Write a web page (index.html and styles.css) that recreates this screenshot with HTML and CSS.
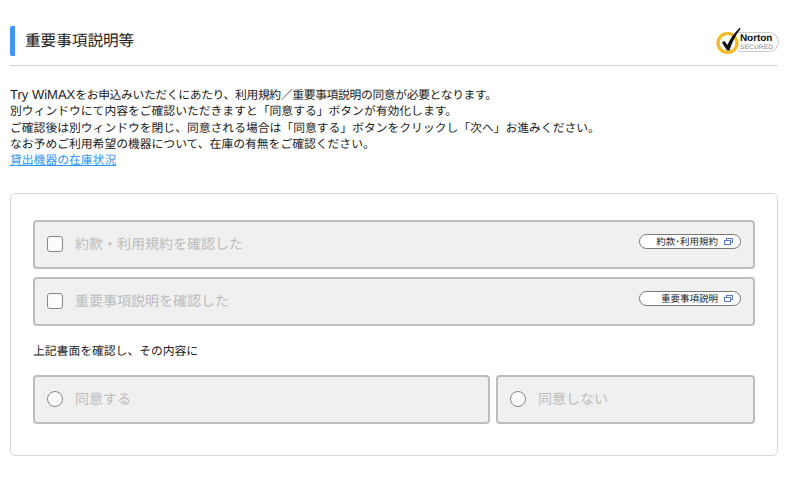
FILE: index.html
```html
<!DOCTYPE html>
<html lang="ja">
<head>
<meta charset="utf-8">
<title>重要事項説明等</title>
<link rel="stylesheet" href="styles.css">
</head>
<body>
<main class="page">
  <header class="head">
    <h1 class="title">重要事項説明等</h1>
    <div class="norton">
      <svg class="norton-mark" viewBox="0 0 30 30" width="30" height="30" aria-hidden="true">
        <circle cx="12.5" cy="16" r="9.5" fill="none" stroke="#f5b921" stroke-width="3.2"/>
        <path d="M7 15.5 L9.5 14 L12.5 18 C15 12 19 6 24 1.5 L25 0.5 L25.5 2 C21 7.5 17 15 14.5 23.5 L12 23.5 Z" fill="#111"/>
      </svg>
      <div class="norton-pill">
        <span class="norton-name">Norton</span>
        <span class="norton-sec">SECURED</span>
      </div>
    </div>
  </header>
  <div class="intro">
    <p class="line line-tight"><span class="latin">Try WiMAX</span>をお申込みいただくにあたり、利用規約／重要事項説明の同意が必要となります。</p>
    <p class="line">別ウィンドウにて内容をご確認いただきますと「同意する」ボタンが有効化します。</p>
    <p class="line">ご確認後は別ウィンドウを閉じ、同意される場合は「同意する」ボタンをクリックし「次へ」お進みください。</p>
    <p class="line">なお予めご利用希望の機器について、在庫の有無をご確認ください。</p>
    <p class="line"><a class="link" href="#">貸出機器の在庫状況</a></p>
  </div>
  <section class="panel">
    <div class="option check-row">
      <span class="check"></span>
      <span class="label">約款・利用規約を確認した</span>
      <a class="doc" href="#"><span class="doc-text">約款･利用規約</span><svg class="win" viewBox="0 0 9 7" width="9" height="7" aria-hidden="true"><rect x="2.5" y="0.5" width="6" height="4" fill="none" stroke="#5a78c8"/><rect x="0.5" y="2.5" width="6" height="4" fill="#fff" stroke="#5a78c8"/></svg></a>
    </div>
    <div class="option check-row">
      <span class="check"></span>
      <span class="label">重要事項説明を確認した</span>
      <a class="doc" href="#"><span class="doc-text">重要事項説明</span><svg class="win" viewBox="0 0 9 7" width="9" height="7" aria-hidden="true"><rect x="2.5" y="0.5" width="6" height="4" fill="none" stroke="#5a78c8"/><rect x="0.5" y="2.5" width="6" height="4" fill="#fff" stroke="#5a78c8"/></svg></a>
    </div>
    <p class="confirm">上記書面を確認し、その内容に</p>
    <div class="radios">
      <div class="option radio-yes"><span class="radio"></span><span class="label">同意する</span></div>
      <div class="option radio-no"><span class="radio"></span><span class="label">同意しない</span></div>
    </div>
  </section>
</main>
</body>
</html>
```
FILE: styles.css
```css
* { box-sizing: border-box; }
html, body { margin: 0; padding: 0; background: #fff; }
body {
  font-family: "Noto Sans CJK JP", "Noto Sans", sans-serif;
  color: #222;
  height: 487px;
  overflow: hidden;
  text-rendering: geometricPrecision;
}
.page { padding: 0 22px 0 10px; }
.head {
  display: flex;
  justify-content: space-between;
  align-items: flex-end;
  height: 66px;
  border-bottom: 1px solid #d5d5d5;
  padding-bottom: 9px;
}
.title {
  margin: 0;
  height: 30px;
  border-left: 5px solid #3f97fb;
  border-radius: 2px;
  padding-left: 10px;
  font-size: 15.6px;
  font-weight: 400;
  line-height: 29px;
}
.norton { position: relative; height: 30px; width: 64px; margin: 0 -1px -1px 0; }
.norton-mark { position: absolute; left: 0; top: 0; }
.norton-pill {
  position: absolute;
  left: 23px;
  top: 5px;
  width: 41px;
  height: 20px;
  border: 1px solid #ccc;
  border-left: 0;
  border-radius: 0 10px 10px 0;
  padding-left: 2px;
  display: flex;
  flex-direction: column;
  font-family: "Liberation Sans", sans-serif;
}
.norton-name { font-size: 10px; font-weight: 700; line-height: 11px; color: #111; letter-spacing: -0.1px; }
.norton-sec { font-size: 6.5px; line-height: 7px; color: #888; letter-spacing: 0.2px; }
.intro {
  margin-top: 21px;
  height: 81px;
  font-size: 11.8px;
  line-height: 16.25px;
  color: #222;
}
.line { margin: 0; white-space: nowrap; }
.line-tight { letter-spacing: -0.35px; }
.latin { font-family: "Liberation Sans", sans-serif; font-size: 13px; letter-spacing: 0; }
.link { color: #2f96f5; }
.panel {
  margin-top: 25px;
  height: 263px;
  border: 1px solid #d8d8d8;
  border-radius: 5px;
  padding: 26px 22px 0;
}
.option {
  display: flex;
  align-items: center;
  background: #f0f0f0;
  border: 2px solid #bdbdbd;
  border-radius: 4px;
  height: 49px;
  padding-left: 12px;
}
.check-row { padding-right: 12px; margin-bottom: 8px; }
.check {
  width: 16px; height: 16px;
  margin-bottom: 1px;
  border: 1px solid #888;
  border-radius: 3px;
  background: #fbfbfb;
  flex: none;
}
.radio {
  width: 16px; height: 16px;
  margin-bottom: 1px;
  border: 1px solid #888;
  border-radius: 50%;
  background: #fbfbfb;
  flex: none;
}
.label { margin-left: 12px; margin-top: -1px; font-size: 14px; color: #bcbcbc; }
.check-row .doc { margin-left: auto; align-self: flex-start; margin-top: 12px; }
.doc {
  width: 102px;
  height: 15px;
  display: flex;
  align-items: center;
  justify-content: flex-end;
  background: #fff;
  border: 1px solid #777;
  border-radius: 8px;
  color: #222;
  text-decoration: none;
  padding-right: 7px;
}
.doc-text { font-size: 9.5px; line-height: 13px; margin-right: 6px; }
.win { flex: none; }
.confirm { margin: 17px 0 0; font-size: 11.8px; line-height: 16px; color: #222; }
.radios { display: flex; gap: 6px; margin-top: 16px; }
.radio-yes { width: 457px; }
.radio-no { flex: 1; }
```
